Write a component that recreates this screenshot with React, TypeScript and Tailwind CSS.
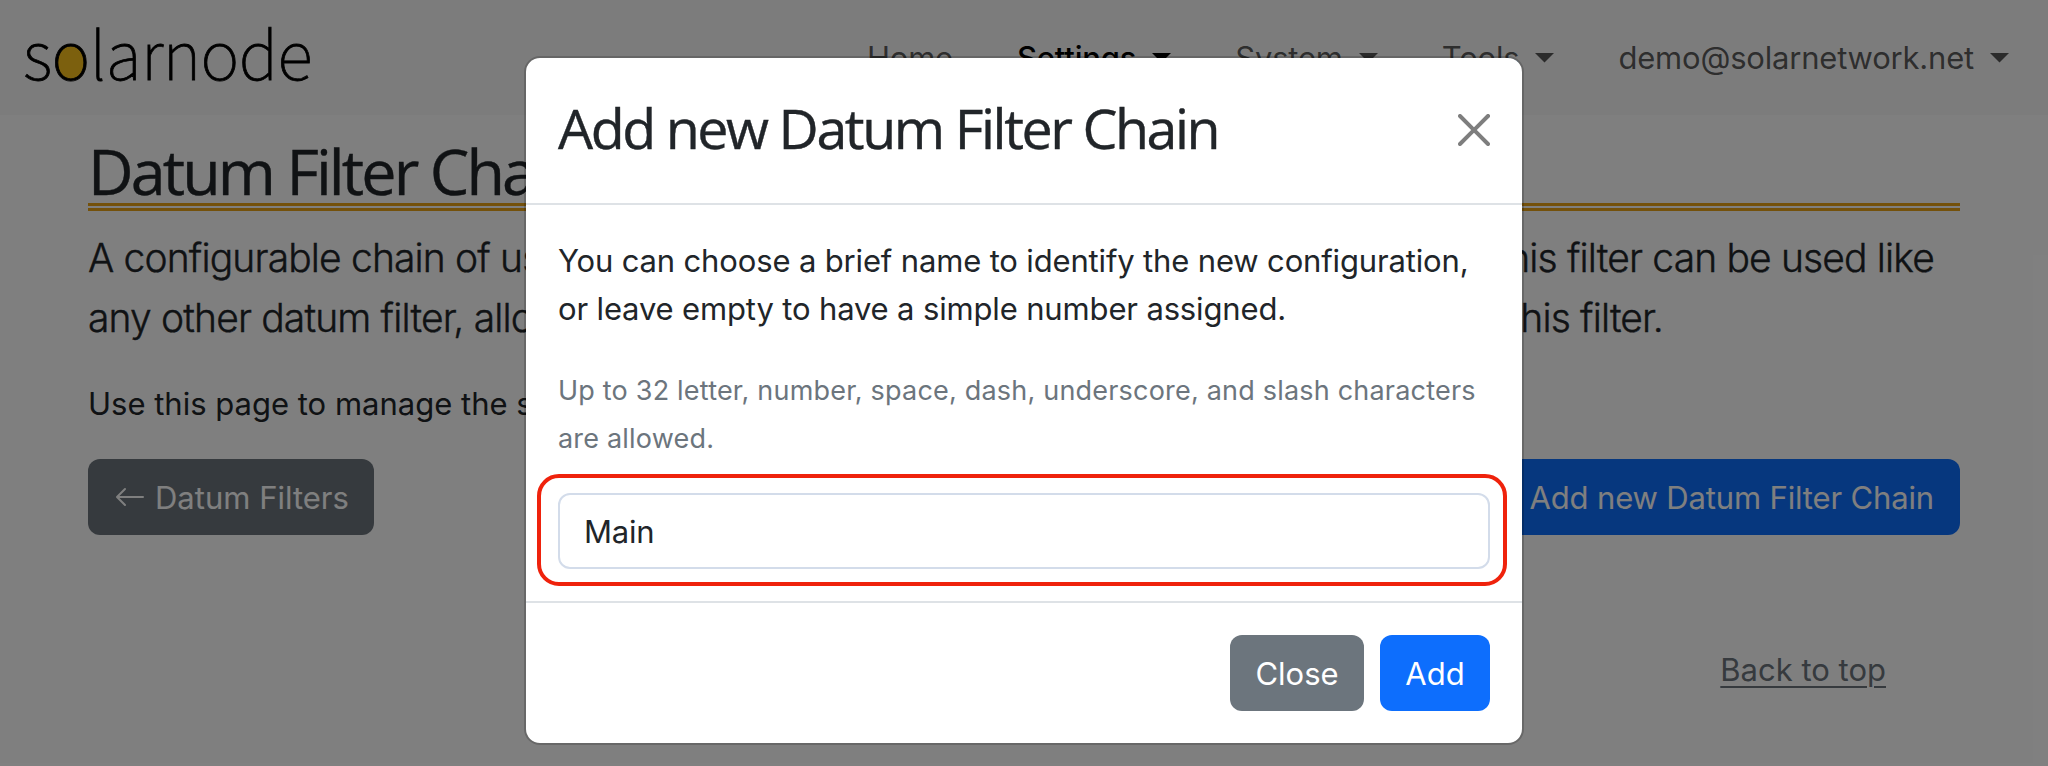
import React from "react";
import { BsArrowLeft } from "react-icons/bs";

const HEADING = "font-['Open_Sans','Noto_Sans',sans-serif] [-webkit-text-stroke:0.4px_currentColor]";

function Caret() {
  return (
    <svg className="ml-4 h-[10px] w-[19px] fill-current" viewBox="0 0 19 10">
      <path d="M0 0H19L9.5 9.6Z" />
    </svg>
  );
}

function NavItem({ label, menu = true, active = false }: { label: string; menu?: boolean; active?: boolean }) {
  return (
    <a className={`flex items-center ${active ? "font-medium text-black" : "text-black/65"}`}>
      {label}
      {menu && <Caret />}
    </a>
  );
}

function Navbar() {
  return (
    <nav className="flex h-[115px] items-center justify-between bg-[#f8f8f8] pr-[39px] pl-[23px]">
      <a className="mb-3.5 flex font-['Noto_Sans_CJK_JP','Noto_Sans',sans-serif] text-[66px] leading-[80px] font-thin tracking-[-0.5px] text-black [-webkit-text-stroke:0.8px_black]">
        <span>s</span>
        <span className="relative">
          <span className="absolute top-[35px] left-[4px] h-[34px] w-[30px] rounded-[50%] bg-[#f8c01c]" />
          <span className="relative">o</span>
        </span>
        <span>larnode</span>
      </a>
      <div className="flex gap-16 text-[31px] leading-[48px] tracking-[-0.2px]">
        <NavItem label="Home" menu={false} />
        <NavItem label="Settings" active />
        <NavItem label="System" />
        <NavItem label="Tools" />
        <NavItem label="demo@solarnetwork.net" />
      </div>
    </nav>
  );
}

function Page() {
  return (
    <main className="px-[88px] pt-[23px]">
      <h1 className={`${HEADING} h-[73px] border-b-8 border-double border-[#e8a317] text-[62.8px] leading-[65px] tracking-[-2.9px]`}>
        Datum Filter Chain
      </h1>
      <div className="mt-[17px] text-[39px] leading-[60px] font-[350] tracking-[-0.85px] [-webkit-text-stroke:0.4px_currentColor]">
        <p className="flex justify-between pr-[26px]">
          <span>A configurable chain of user-</span>
          <span>This filter can be used like</span>
        </p>
        <p className="flex justify-between pr-[297px]">
          <span>any other datum filter, allow</span>
          <span>this filter.</span>
        </p>
      </div>
      <p className="mt-8 text-[31px] leading-[48px]">Use this page to manage the settings</p>
      <div className="mt-[31px] flex justify-between text-[31px] text-white">
        <button className="flex h-[76px] w-[286px] items-center rounded-xl bg-[#6c757d] px-[26px] pt-0.5">
          <BsArrowLeft className="mr-[9px] mb-0.5 size-8 shrink-0" />
          <span className="whitespace-nowrap">Datum Filters</span>
        </button>
        <button className="h-[76px] rounded-xl bg-[#0d6efd] px-[26px] pt-0.5 tracking-[-0.15px]">Add new Datum Filter Chain</button>
      </div>
      <div className="mt-[111px] flex justify-end pr-[74px] text-[31px] leading-[48px]">
        <a className="text-[#6c757d] underline decoration-2 underline-offset-[5px]">Back to top</a>
      </div>
    </main>
  );
}

function Modal() {
  return (
    <div className="h-[689px] w-[1000px] overflow-hidden rounded-2xl border-2 border-black/[0.175] bg-white bg-clip-padding">
      <header className="flex h-[147px] items-center justify-between border-b-2 border-[#dee2e6] px-8 pb-px">
        <h2 className={`${HEADING} -mt-1 text-[55.5px] leading-[64px] tracking-[-2.43px]`}>Add new Datum Filter Chain</h2>
        <svg className="size-8 fill-black opacity-50" viewBox="0 0 16 16">
          <path d="M.293.293a1 1 0 0 1 1.414 0L8 6.586 14.293.293a1 1 0 1 1 1.414 1.414L9.414 8l6.293 6.293a1 1 0 0 1-1.414 1.414L8 9.414l-6.293 6.293a1 1 0 0 1-1.414-1.414L6.586 8 .293 1.707a1 1 0 0 1 0-1.414z" />
        </svg>
      </header>
      <div className="relative h-[396px] px-8 pt-8">
        <p className="text-[31px] leading-[48px] tracking-[-0.15px]">
          You can choose a brief name to identify the new configuration,
          <br />
          or leave empty to have a simple number assigned.
        </p>
        <p className="mt-[34px] text-[27px] leading-[48px] tracking-[0.2px] text-[#6c757d]">
          Up to 32 letter, number, space, dash, underscore, and slash characters
          <br />
          are allowed.
        </p>
        <input
          className="mt-[30px] block h-[76px] w-full rounded-xl border-2 border-[#d3dcea] px-6 text-[31px] tracking-[-0.2px] outline-none"
          defaultValue="Main"
        />
        <div className="absolute top-[269px] left-[11px] h-[112px] w-[970px] rounded-[22px] border-4 border-[#ef220c]" />
      </div>
      <footer className="flex justify-end gap-4 border-t-2 border-[#dee2e6] px-8 py-8 text-[31px] text-white">
        <button className="h-[76px] w-[134px] rounded-xl bg-[#6c757d] pt-0.5">Close</button>
        <button className="h-[76px] w-[110px] rounded-xl bg-[#0d6efd] pt-0.5">Add</button>
      </footer>
    </div>
  );
}

export default function App() {
  return (
    <div className="relative h-[766px] w-[2048px] overflow-hidden bg-white font-['Inter',sans-serif] text-[#212529]">
      <Navbar />
      <Page />
      <div className="absolute inset-0 flex items-start justify-center bg-black/50 pt-14">
        <Modal />
      </div>
    </div>
  );
}
